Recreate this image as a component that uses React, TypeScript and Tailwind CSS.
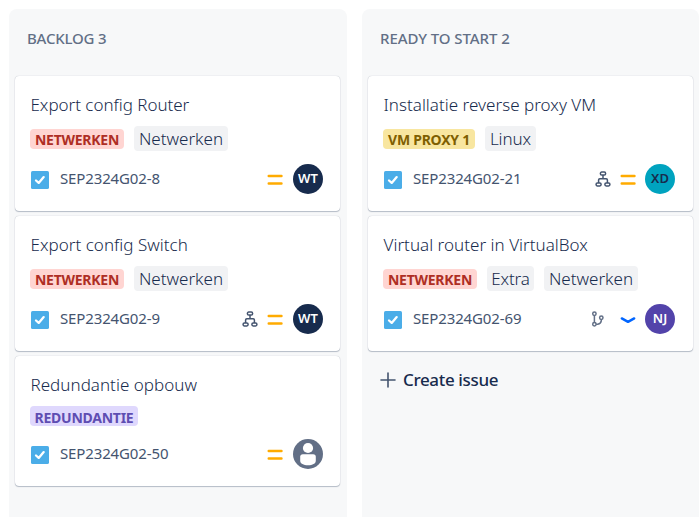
import type { ReactNode } from "react";

function Lozenge({ className, children }: { className: string; children: ReactNode }) {
  return (
    <span className={`flex h-5 items-center justify-center whitespace-nowrap rounded-[4px] pt-[2px] text-[14px] font-bold ${className}`}>
      {children}
    </span>
  );
}

function Tag({ className, children }: { className: string; children: ReactNode }) {
  return (
    <span className={`flex h-[25px] items-center justify-center whitespace-nowrap rounded-[4px] bg-[#f1f2f4] text-[17px] font-[360] text-[#172b4d] ${className}`}>
      {children}
    </span>
  );
}

function TaskIcon() {
  return (
    <svg width="18" height="18" viewBox="0 0 18 18" className="shrink-0">
      <rect width="18" height="18" rx="1.6" fill="#4bade8" />
      <path d="M5 9.5 7.7 11.9 12.7 6.1" fill="none" stroke="#fff" strokeWidth="2.3" strokeLinecap="round" strokeLinejoin="round" />
    </svg>
  );
}

function MediumPriority() {
  return (
    <svg width="20" height="20" viewBox="0 0 20 20">
      <path d="M3.7 6H16.5M3.7 13.5H16.5" stroke="#ffab00" strokeWidth="2.4" strokeLinecap="round" />
    </svg>
  );
}

function LowPriority() {
  return (
    <svg width="20" height="20" viewBox="0 0 20 20">
      <path d="M3.8 8.4 10 11.9 16.2 8.4" fill="none" stroke="#0065ff" strokeWidth="2.4" strokeLinecap="round" strokeLinejoin="round" />
    </svg>
  );
}

function SubtasksIcon() {
  return (
    <svg width="16" height="16" viewBox="0 0 16 16" fill="none" stroke="#44546f" strokeWidth="1.5">
      <rect x="5.4" y="1.1" width="5.2" height="2.9" rx="1.3" />
      <rect x="1.1" y="12" width="5" height="2.9" rx="1.3" />
      <rect x="9.9" y="12" width="5" height="2.9" rx="1.3" />
      <path d="M8 4V7.7M3.6 12V8.9Q3.6 7.7 4.8 7.7H11.2Q12.4 7.7 12.4 8.9V12" />
    </svg>
  );
}

function BranchIcon() {
  return (
    <svg width="14" height="16" viewBox="0 0 14 16" fill="none" stroke="#626f86" strokeWidth="1.5">
      <circle cx="3.4" cy="2.8" r="1.7" />
      <circle cx="3.4" cy="13.2" r="1.7" />
      <circle cx="10.3" cy="6.8" r="1.7" />
      <path d="M3.4 4.5V11.5M10.3 8.5V9.8Q10.1 12.8 6.8 13.2H5.1" />
    </svg>
  );
}

function Avatar({ className, children }: { className: string; children: ReactNode }) {
  return (
    <span className={`flex size-[30px] items-center justify-center rounded-full text-[13px] font-semibold ${className}`}>
      {children}
    </span>
  );
}

function PersonAvatar() {
  return (
    <svg width="30" height="30" viewBox="0 0 30 30">
      <circle cx="15" cy="15" r="15" fill="#626f86" />
      <circle cx="15" cy="9" r="5.1" fill="#fff" />
      <path d="M9.8 15.2H20.2Q22.8 15.2 22.8 17.8V21.5C22.8 24.8 19.5 26.2 15 26.2S7.2 24.8 7.2 21.5V17.8Q7.2 15.2 9.8 15.2Z" fill="#fff" />
    </svg>
  );
}

function Card({ title, titleClass, labels, issueKey, extra, priority, avatar, short, tight }: {
  title: string;
  titleClass: string;
  labels: ReactNode;
  issueKey: string;
  extra?: ReactNode;
  priority: ReactNode;
  avatar: ReactNode;
  short?: boolean;
  tight?: boolean;
}) {
  return (
    <article className={`flex w-[325px] flex-col rounded-[4px] bg-white pl-[15px] pr-[14px] pt-[17px] shadow-[0_1px_1px_rgba(9,30,66,0.25),0_0_1px_rgba(9,30,66,0.31)] ${short ? "h-[130px]" : "h-[135px]"}`}>
      <h3 className={`h-6 whitespace-nowrap pl-[0.5px] text-[17px] font-[360] leading-6 text-[#172b4d] ${titleClass}`}>{title}</h3>
      <div className={`mt-[9px] flex items-center gap-[10px] ${short ? "h-5" : "h-[25px]"}`}>{labels}</div>
      <div className={`mt-[13px] flex h-[30px] items-center pl-px ${tight ? "pr-[4px]" : "pr-[3px]"}`}>
        <div className="pt-px"><TaskIcon /></div>
        <span className="ml-[11px] whitespace-nowrap pb-[2px] text-[15px] tracking-[-0.13px] text-[#44546f]">{issueKey}</span>
        <div className="ml-auto flex items-center">
          {extra}
          <div className={`pt-px ${tight ? "mr-[7px]" : "mr-[8px]"}`}>{priority}</div>
          {avatar}
        </div>
      </div>
    </article>
  );
}

function Column({ title, titleClass, children }: { title: string; titleClass: string; children: ReactNode }) {
  return (
    <section className="flex h-[520px] flex-col rounded-[8px] bg-[#f7f8f9] px-[6px]">
      <h2 className={`h-[67px] whitespace-nowrap pl-[12px] pt-[19px] text-[15px] font-medium leading-5 text-[#626f86] ${titleClass}`}>{title}</h2>
      <div className="flex flex-col gap-[5px]">{children}</div>
    </section>
  );
}

const netwerkenEpic = (
  <Lozenge className="w-[94px] bg-[#ffd5d2] tracking-[-0.25px] text-[#ae2e24]">NETWERKEN</Lozenge>
);

const netwerkenTag = <Tag className="w-[94px] tracking-[0px]">Netwerken</Tag>;

export default function App() {
  return (
    <main className="grid h-[517px] w-[700px] grid-cols-[338px_337px] gap-x-[15px] overflow-hidden bg-white pl-[9px] pt-[9px] font-['Noto_Sans',sans-serif]">
      <Column title="BACKLOG 3" titleClass="tracking-[-0.2px]">
        <Card
          title="Export config Router"
          titleClass="tracking-[-0.03px]"
          labels={<>{netwerkenEpic}{netwerkenTag}</>}
          issueKey="SEP2324G02-8"
          priority={<MediumPriority />}
          avatar={<Avatar className="bg-[#172b4d] text-white">WT</Avatar>}
        />
        <Card
          title="Export config Switch"
          titleClass="tracking-[0.02px]"
          labels={<>{netwerkenEpic}{netwerkenTag}</>}
          issueKey="SEP2324G02-9"
          extra={<div className="mr-[7px]"><SubtasksIcon /></div>}
          priority={<MediumPriority />}
          avatar={<Avatar className="bg-[#172b4d] text-white">WT</Avatar>}
        />
        <Card
          short
          title="Redundantie opbouw"
          titleClass="tracking-[0.02px]"
          labels={<Lozenge className="w-[108px] bg-[#dfd8fd] tracking-[-0.25px] text-[#5e4db2]">REDUNDANTIE</Lozenge>}
          issueKey="SEP2324G02-50"
          priority={<MediumPriority />}
          avatar={<PersonAvatar />}
        />
      </Column>
      <Column title="READY TO START 2" titleClass="tracking-[-0.07px]">
        <Card
          tight
          title="Installatie reverse proxy VM"
          titleClass="tracking-[0.02px]"
          labels={<><Lozenge className="w-[92px] bg-[#f8e6a0] tracking-[-0.25px] text-[#7f5f01]">VM PROXY 1</Lozenge><Tag className="w-[51px] tracking-[-0.1px]">Linux</Tag></>}
          issueKey="SEP2324G02-21"
          extra={<div className="mr-[7px]"><SubtasksIcon /></div>}
          priority={<MediumPriority />}
          avatar={<Avatar className="bg-[#00a3bf] text-[#172b4d]">XD</Avatar>}
        />
        <Card
          tight
          title="Virtual router in VirtualBox"
          titleClass="tracking-[0.02px]"
          labels={<>{netwerkenEpic}<Tag className="w-[47px] tracking-[-0.1px]">Extra</Tag>{netwerkenTag}</>}
          issueKey="SEP2324G02-69"
          extra={<div className="mr-[13px]"><BranchIcon /></div>}
          priority={<LowPriority />}
          avatar={<Avatar className="bg-[#5243aa] text-white">NJ</Avatar>}
        />
        <button className="mt-[7px] flex h-[34px] items-center pl-[12px] text-[17px] font-medium text-[#172b4d]">
          <svg width="16" height="16" viewBox="0 0 16 16" className="mr-[7px]">
            <path d="M8 1V15M1 8H15" stroke="#44546f" strokeWidth="1.6" strokeLinecap="round" />
          </svg>
          <span className="whitespace-nowrap tracking-[-0.35px]">Create issue</span>
        </button>
      </Column>
    </main>
  );
}
